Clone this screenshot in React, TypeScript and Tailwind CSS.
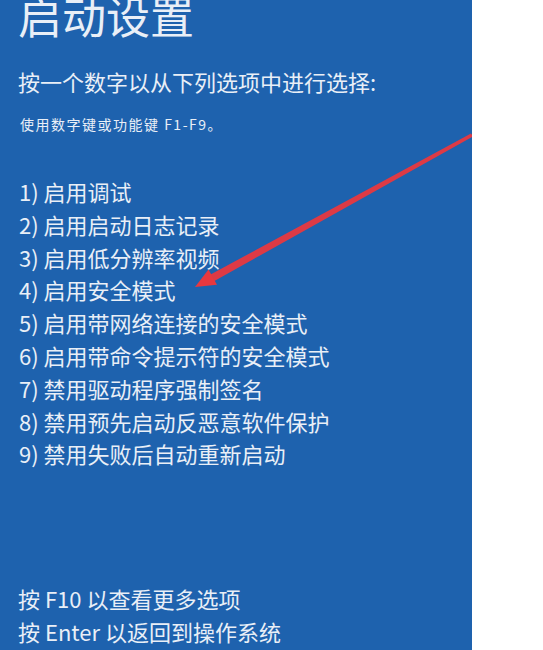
import React from "react";

const items = [
  "1) 启用调试",
  "2) 启用启动日志记录",
  "3) 启用低分辨率视频",
  "4) 启用安全模式",
  "5) 启用带网络连接的安全模式",
  "6) 启用带命令提示符的安全模式",
  "7) 禁用驱动程序强制签名",
  "8) 禁用预先启动反恶意软件保护",
  "9) 禁用失败后自动重新启动",
];

export default function App() {
  return (
    <div
      className="w-[543px] h-[650px] bg-white flex overflow-hidden"
      style={{ fontFamily: '"Noto Sans CJK SC", "Noto Sans", sans-serif' }}
    >
      <div className="relative w-[472px] h-full bg-[#1e62ae] text-[#e9eff7] flex flex-col pl-[18px] overflow-hidden">
        <div className="text-[44px] leading-[44px] mt-[-7px]">启动设置</div>
        <div className="text-[22px] leading-[30px] mt-[29px]">按一个数字以从下列选项中进行选择:</div>
        <div className="text-[14px] leading-[20px] mt-[18px] ml-[2px] tracking-[1.5px]">使用数字键或功能键 F1-F9。</div>
        <div className="flex flex-col mt-[41px] ml-[1px]">
          {items.map((t) => (
            <div key={t} className="text-[22px] leading-[32.8px]">
              {t}
            </div>
          ))}
        </div>
        <div className="flex-1" />
        <div className="flex flex-col mb-[2px]">
          <div className="text-[22px] leading-[33px]">按 F10 以查看更多选项</div>
          <div className="text-[22px] leading-[33px]">按 Enter 以返回到操作系统</div>
        </div>
        <svg
          className="absolute left-0 top-0"
          width="472"
          height="650"
          viewBox="0 0 472 650"
        >
          <polygon
            points="473,136.5 471,133.5 210.6,274.5 214.4,281"
            fill="#e8383f"
            opacity="0.95"
          />
          <polygon points="195,287 208.5,269.5 217,284.8" fill="#e8383f" />
        </svg>
      </div>
    </div>
  );
}
